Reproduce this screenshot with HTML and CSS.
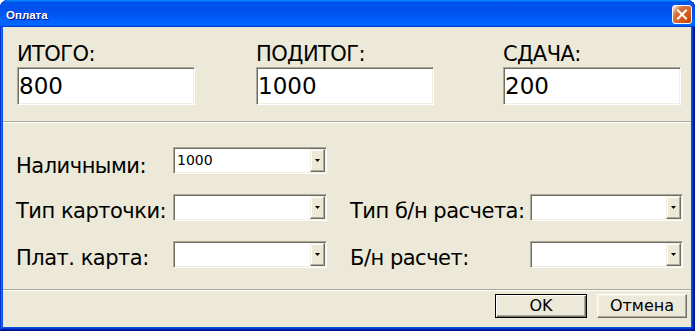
FILE: index.html
```html
<!DOCTYPE html>
<html lang="ru">
<head>
<meta charset="utf-8">
<title>Оплата</title>
<link rel="stylesheet" href="styles.css">
</head>
<body>
<div class="window">
  <div class="titlebar">
    <span class="title">Оплата</span>
    <div class="close">
      <svg width="18" height="17" viewBox="0 0 18 17"><path d="M5 4.5 L13 12.5 M13 4.5 L5 12.5" stroke="#fff" stroke-width="2" stroke-linecap="square" fill="none"/></svg>
    </div>
  </div>
  <div class="client">
    <div class="totals">
      <div class="field">
        <div class="biglabel">ИТОГО:</div>
        <div class="bigbox">800</div>
      </div>
      <div class="field">
        <div class="biglabel">ПОДИТОГ:</div>
        <div class="bigbox">1000</div>
      </div>
      <div class="field">
        <div class="biglabel">СДАЧА:</div>
        <div class="bigbox">200</div>
      </div>
    </div>
    <div class="sep"></div>
    <div class="payment">
      <div class="label first">Наличными:</div>
      <div class="combo"><span class="value">1000</span><span class="drop"><svg width="5" height="3" viewBox="0 0 5 3"><polygon points="0,0 5,0 2.5,3" fill="#000"/></svg></span></div>
      <div class="label c1">Тип карточки:</div>
      <div class="combo c2"><span class="value"></span><span class="drop"><svg width="5" height="3" viewBox="0 0 5 3"><polygon points="0,0 5,0 2.5,3" fill="#000"/></svg></span></div>
      <div class="label c3">Тип б/н расчета:</div>
      <div class="combo c4"><span class="value"></span><span class="drop"><svg width="5" height="3" viewBox="0 0 5 3"><polygon points="0,0 5,0 2.5,3" fill="#000"/></svg></span></div>
      <div class="label c1">Плат. карта:</div>
      <div class="combo c2"><span class="value"></span><span class="drop"><svg width="5" height="3" viewBox="0 0 5 3"><polygon points="0,0 5,0 2.5,3" fill="#000"/></svg></span></div>
      <div class="label c3">Б/н расчет:</div>
      <div class="combo c4"><span class="value"></span><span class="drop"><svg width="5" height="3" viewBox="0 0 5 3"><polygon points="0,0 5,0 2.5,3" fill="#000"/></svg></span></div>
    </div>
    <div class="sep"></div>
    <div class="buttons">
      <div class="btn default">OK</div>
      <div class="btn cancel">Отмена</div>
    </div>
  </div>
</div>
</body>
</html>
```

FILE: styles.css
```css
html, body {
  margin: 0;
  padding: 0;
  background: #ffffff;
}

.window {
  width: 695px;
  height: 331px;
  display: flex;
  flex-direction: column;
  background: #0855dd;
  border-radius: 8px 8px 0 0;
  box-shadow: inset -1px -1px #00138c, inset 1px 1px #0831d9, inset -2px -2px #001ea0, inset 2px 2px #166aee, inset -3px -3px #003bda, inset 3px 3px #0855dd;
  overflow: hidden;
}

.titlebar {
  height: 27px;
  flex: none;
  display: flex;
  align-items: flex-start;
  border-radius: 8px 8px 0 0;
  background: linear-gradient(180deg, #0997ff, #0053ee 8%, #0050ee 40%, #0066ff 88%, #0066ff 93%, #005bff 95%, #003dd7 96%, #003dd7);
}

.title {
  padding: 4px 0 0 6px;
  line-height: 23px;
  font-family: "Liberation Sans", Arial, sans-serif;
  font-weight: bold;
  font-size: 11.5px;
  color: #ffffff;
  text-shadow: 1px 1px #0f1089;
}

.close {
  margin: 5px 3px 0 auto;
  width: 18px;
  height: 17px;
  border: 1px solid #ffffff;
  border-radius: 3px;
  background: radial-gradient(circle at 90% 90%, #cc4600 0, #dc6527 55%, #cd7546 70%, #ffccb2 90%, #ffffff 100%);
  display: flex;
}

.client {
  flex: 1;
  margin: 0 4px 4px 3px;
  background: #ece9d8;
  display: flex;
  flex-direction: column;
  font-family: "DejaVu Sans", Verdana, sans-serif;
  color: #000000;
}

.totals {
  display: grid;
  grid-template-columns: 239px 247px 178px;
  padding: 15px 0 16px 14px;
}

.biglabel {
  font-size: 21px;
  line-height: 25px;
  letter-spacing: -0.6px;
  white-space: nowrap;
}

.bigbox {
  width: 178px;
  height: 38px;
  box-sizing: border-box;
  background: #ffffff;
  border: 1px solid;
  border-color: #aca899 #ffffff #ffffff #aca899;
  box-shadow: inset 1px 1px #716f64, inset -1px -1px #f1efe2;
  padding-left: 1px;
  font-size: 23px;
  line-height: 36px;
}

.sep {
  height: 1px;
  flex: none;
  background: #aca899;
  border-bottom: 1px solid #ffffff;
}

.payment {
  display: grid;
  grid-template-columns: 157px 177px 180px 153px;
  grid-auto-rows: 27px;
  row-gap: 20px;
  padding: 24px 0 21px 13px;
}

.label {
  font-size: 21px;
  line-height: 25px;
  letter-spacing: -0.5px;
  white-space: nowrap;
  margin-top: 5px;
}

.label.first {
  margin-top: 7px;
}

.c1 { grid-column: 1; }
.c2 { grid-column: 2; }
.c3 { grid-column: 3; }
.c4 { grid-column: 4; }

.combo {
  width: 154px;
  height: 27px;
  box-sizing: border-box;
  background: #ffffff;
  border: 1px solid;
  border-color: #aca899 #ffffff #ffffff #aca899;
  box-shadow: inset 1px 1px #716f64, inset -1px -1px #f1efe2;
  padding: 1px;
  display: flex;
}

.combo.c4 {
  width: 153px;
}

.value {
  flex: 1;
  padding-left: 2px;
  font-size: 14px;
  line-height: 23px;
}

.drop {
  width: 15px;
  box-sizing: border-box;
  background: #ece9d8;
  border: 1px solid;
  border-color: #f1efe2 #716f64 #716f64 #f1efe2;
  box-shadow: inset -1px -1px #aca899, inset 1px 1px #ffffff;
  display: flex;
  align-items: center;
  justify-content: center;
}

.buttons {
  display: flex;
  justify-content: flex-end;
  gap: 10px;
  padding: 3px 4px 0 0;
}

.btn {
  height: 24px;
  box-sizing: border-box;
  background: #ece9d8;
  font-size: 16px;
  line-height: 22px;
  text-align: center;
  border: 1px solid;
}

.btn.default {
  width: 92px;
  border-color: #000000;
  box-shadow: inset 1px 1px #ffffff, inset -1px -1px #716f64, inset -2px -2px #aca899;
}

.btn.cancel {
  width: 90px;
  border-color: #ffffff #716f64 #716f64 #ffffff;
  box-shadow: inset -1px -1px #aca899, inset 1px 1px #f1efe2;
}
```
